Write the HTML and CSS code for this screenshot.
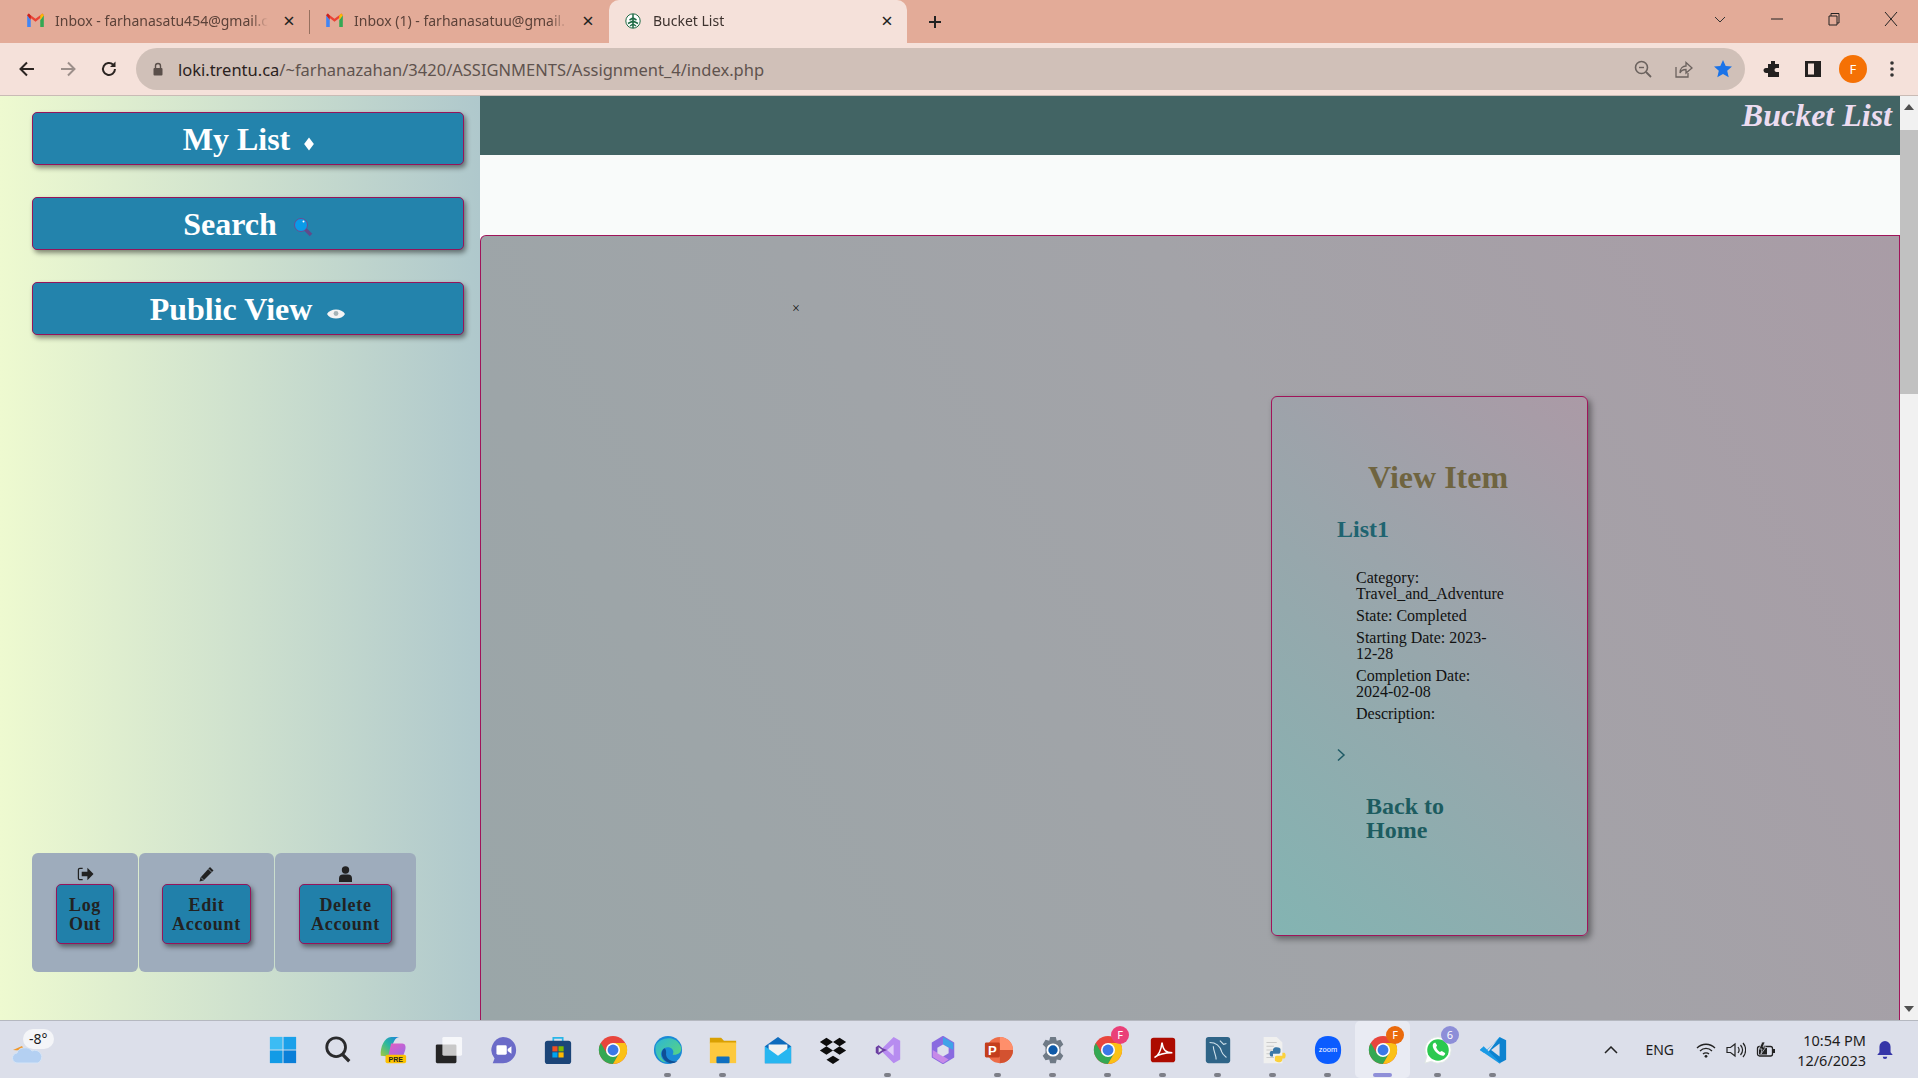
FILE: index.html
```html
<!DOCTYPE html>
<html lang="en">
<head>
    <meta charset="UTF-8">
    <title>Bucket List</title>
    <link rel="stylesheet" href="styles.css">
</head>
<body>
    <svg class="defs" width="0" height="0">
        <defs>
            <symbol id="gmail" viewBox="0 0 16 16">
                <path d="M1 3.500v10h3v-6z" fill="#4285f4"/>
                <path d="M12 7.500v6h3v-10z" fill="#34a853"/>
                <path d="M1 3.500 8 9l7-5.500-1-1.500-6 4.500L2 2z" fill="#ea4335"/>
                <path d="M1 3.500 4 7.500V4L2.500 2.200z" fill="#c5221f"/>
                <path d="M12 7.500 15 3.500 13.500 2.200 12 4z" fill="#fbbc04"/>
            </symbol>
            <symbol id="chrome" viewBox="0 0 32 32">
                <circle cx="16" cy="16" r="15" fill="#e8453c"/>
                <path d="M3 8.500A15 15 0 0 0 16 31l6.500-11.250H9.500z" fill="#34a853"/>
                <path d="M29 8.500H16l6.500 11.250L16 31A15 15 0 0 0 29 8.500z" fill="#fbc116"/>
                <circle cx="16" cy="16" r="7.500" fill="#fff"/>
                <circle cx="16" cy="16" r="5.800" fill="#3b78e7"/>
            </symbol>
            <linearGradient id="copilot-a" x1="0" y1="1" x2="1" y2="0">
                <stop offset="0" stop-color="#a6c93c"/>
                <stop offset=".5" stop-color="#2ab7a0"/>
                <stop offset="1" stop-color="#1a7fe0"/>
            </linearGradient>
            <linearGradient id="copilot-b" x1="0" y1="0" x2="1" y2="1">
                <stop offset="0" stop-color="#e85cc0"/>
                <stop offset="1" stop-color="#9a6ce8"/>
            </linearGradient>
            <linearGradient id="edge-a" x1="0" y1="0" x2="1" y2="1">
                <stop offset="0" stop-color="#2bb5d8"/>
                <stop offset="1" stop-color="#62da70"/>
            </linearGradient>
        </defs>
    </svg>

    <header class="chrome">
        <div class="tabstrip">
            <div class="tab">
                <svg class="favicon favicon-mail"><use href="#gmail"/></svg>
                <span class="tab-title">Inbox - farhanasatu454@gmail.c</span>
                <span class="tab-close">&#215;</span>
            </div>
            <div class="tab tab-sep">
                <svg class="favicon favicon-mail"><use href="#gmail"/></svg>
                <span class="tab-title">Inbox (1) - farhanasatuu@gmail.</span>
                <span class="tab-close">&#215;</span>
            </div>
            <div class="tab tab-active">
                <svg class="favicon" viewBox="0 0 16 16">
                    <circle cx="8" cy="8" r="7.200" fill="#fff" stroke="#1f6b45"/>
                    <path d="M8 1v14M8 5 4.500 7M8 5l3.500 2M8 8 3 10.500M8 8l5 2.500M8 11l-3 2M8 11l3 2" stroke="#1f6b45" stroke-width="1.500" fill="none"/>
                </svg>
                <span class="tab-title">Bucket List</span>
                <span class="tab-close">&#215;</span>
            </div>
            <svg class="new-tab" viewBox="0 0 16 16"><path d="M8 2v12M2 8h12" stroke="#222" stroke-width="2"/></svg>
            <div class="window-btns">
                <svg viewBox="0 0 16 16"><path d="M3 6l5 5 5-5" fill="none" stroke="#333"/></svg>
                <svg viewBox="0 0 16 16"><path d="M2 8h12" stroke="#222"/></svg>
                <svg viewBox="0 0 16 16"><path d="M3 5h8v9H3zM5 5V2.500h8V12h-2" fill="none" stroke="#222"/></svg>
                <svg viewBox="0 0 16 16"><path d="M2 1l12 14M14 1 2 15" stroke="#222"/></svg>
            </div>
        </div>
        <div class="toolbar">
            <svg class="nav-icon" viewBox="0 0 20 20"><path d="M17 10H4M10 3.500 3.500 10l6.500 6.500" fill="none" stroke="#2b2421" stroke-width="2"/></svg>
            <svg class="nav-icon" viewBox="0 0 20 20"><path d="M3 10h13M10 3.500l6.500 6.500-6.500 6.500" fill="none" stroke="#9c8f8a" stroke-width="2"/></svg>
            <svg class="nav-icon" viewBox="0 0 20 20"><path d="M16 10a6 6 0 1 1-1.800-4.300" fill="none" stroke="#2b2421" stroke-width="2"/><path d="M16.500 2.500v5.500H11z" fill="#2b2421"/></svg>
            <div class="omnibox">
                <svg class="lock" viewBox="0 0 12 14"><path d="M3.500 6V4a2.500 2.500 0 0 1 5 0v2" fill="none" stroke="#5a4f4a" stroke-width="1.400"/><rect x="1.500" y="6" width="9" height="7.500" rx="1" fill="#5a4f4a"/></svg>
                <span class="url"><b>loki.trentu.ca</b>/~farhanazahan/3420/ASSIGNMENTS/Assignment_4/index.php</span>
                <svg class="omni-icon" viewBox="0 0 20 20"><circle cx="8.500" cy="8.500" r="6" fill="none" stroke="#6b625e" stroke-width="1.600"/><path d="M13 13l5 5" stroke="#6b625e" stroke-width="1.800"/><path d="M6 8.500h5" stroke="#6b625e" stroke-width="1.400"/></svg>
                <svg class="omni-icon" viewBox="0 0 20 20"><path d="M3 8v10h12v-4" fill="none" stroke="#6b625e" stroke-width="1.300"/><path d="M7 14c0-5 3-7 6-7V3.500l6 5.500-6 5v-3.500c-3 0-5 1-6 3.500z" fill="none" stroke="#6b625e" stroke-width="1.300"/></svg>
                <svg class="omni-icon" viewBox="0 0 20 20"><path d="M10 1l2.700 6 6.300.6-4.800 4.200 1.500 6.400L10 15l-5.700 3.200 1.500-6.400L1 7.600 7.300 7z" fill="#1a73e8"/></svg>
            </div>
            <svg class="tool-icon" viewBox="0 0 20 20"><path d="M8 2h4v3h4v4h-2.500a2 2 0 0 0 0 4H16v5H5v-4H3a2.500 2.500 0 0 1 0-5h2V5h3z" fill="#23201f"/></svg>
            <svg class="tool-icon" viewBox="0 0 20 20"><rect x="2" y="2" width="16" height="16" fill="#23201f"/><rect x="5" y="4.500" width="6" height="11" fill="#f5e1da"/></svg>
            <span class="avatar">F</span>
            <svg class="tool-icon" viewBox="0 0 20 20"><circle cx="10" cy="4" r="1.800" fill="#333"/><circle cx="10" cy="10" r="1.800" fill="#333"/><circle cx="10" cy="16" r="1.800" fill="#333"/></svg>
        </div>
    </header>

    <div class="page">
        <aside class="sidebar">
            <nav class="side-nav">
                <a class="nav-btn">My List<span class="diamond"></span></a>
                <a class="nav-btn">Search<svg class="nav-glyph" viewBox="0 0 20 20"><path d="M12 12l6 6" stroke="#5f4b8b" stroke-width="3.500"/><circle cx="8" cy="8" r="6.500" fill="#0a9be8" stroke="#6a4c93" stroke-width="1"/><circle cx="10.500" cy="4.500" r="1" fill="#fff"/></svg></a>
                <a class="nav-btn">Public View<svg class="nav-glyph eye" viewBox="0 0 20 12"><path d="M1 6c3-6 15-6 18 0-3 6-15 6-18 0z" fill="#f4f4f4"/><circle cx="10" cy="5.500" r="2.400" fill="#a6b4b8"/></svg></a>
            </nav>
            <div class="account-bar">
                <div class="account-cell cell-logout">
                    <svg class="acc-icon" viewBox="0 0 18 16"><path d="M6 2H3a1.500 1.500 0 0 0-1.500 1.500v9A1.500 1.500 0 0 0 3 14h3" fill="none" stroke="#222" stroke-width="1.300"/><path d="M5 5.500h6V1.500L17.500 8 11 14.500v-4H5z" fill="#222"/></svg>
                    <a class="acc-btn">Log<br>Out</a>
                </div>
                <div class="account-cell cell-edit">
                    <svg class="acc-icon" viewBox="0 0 16 16"><path d="M11.500 1 15 4.500 5 14.500 1 15.500l1-4z" fill="#222"/><path d="M10 3l3.500 3.500M2.500 11.500l2.500 2.500" stroke="#9eacbc" stroke-width=".8"/></svg>
                    <a class="acc-btn">Edit<br>Account</a>
                </div>
                <div class="account-cell cell-delete">
                    <svg class="acc-icon" viewBox="0 0 16 16"><circle cx="8" cy="4" r="3.700" fill="#222"/><path d="M1.500 16v-3.500A4 4 0 0 1 5.500 8.500h5a4 4 0 0 1 4 4V16z" fill="#222"/></svg>
                    <a class="acc-btn">Delete<br>Account</a>
                </div>
            </div>
        </aside>

        <main class="content">
            <div class="banner"><span class="brand">Bucket List</span></div>
            <div class="spacer"></div>
            <section class="panel">
                <span class="modal-x">&#215;</span>
                <div class="card">
                    <h2 class="card-title">View Item</h2>
                    <h3 class="item-name">List1</h3>
                    <ul class="details">
                        <li>Category: Travel_and_Adventure</li>
                        <li>State: Completed</li>
                        <li>Starting Date: 2023-12-28</li>
                        <li>Completion Date: 2024-02-08</li>
                        <li>Description:</li>
                    </ul>
                    <svg class="chev" viewBox="0 0 10 14"><path d="M2 1.500 8 7l-6 5.500" fill="none" stroke="#1f5a66" stroke-width="1.500"/></svg>
                    <a class="back-link">Back to Home</a>
                </div>
            </section>
        </main>

        <div class="scrollbar">
            <span class="arrow-up"></span>
            <span class="thumb"></span>
            <span class="arrow-down"></span>
        </div>
    </div>

    <footer class="taskbar">
        <div class="weather">
            <svg class="weather-icon" viewBox="0 0 32 26"><path d="M1 12l9-4 3 5z" fill="#f0982c"/><path d="M6 25a5 5 0 0 1-1-10 8 6 0 0 1 15-2 6 6 0 0 1 6 12z" fill="#b4d0f2" stroke="#d5e4f6"/></svg>
            <span class="temp">-8°</span>
        </div>
        <div class="apps">
            <span class="app"><svg viewBox="0 0 32 32"><path d="M2 2h13.500v13.500H2z" fill="#3cbcf4"/><path d="M16.500 2H30v13.500H16.500z" fill="#1ba1ea"/><path d="M2 16.500h13.500V30H2z" fill="#129be6"/><path d="M16.500 16.500H30V30H16.500z" fill="#0a7fd8"/></svg></span>
            <span class="app"><svg viewBox="0 0 32 32"><circle cx="14" cy="13" r="10" fill="none" stroke="#2a2a2c" stroke-width="3"/><path d="M21 21l7 7" stroke="#2a2a2c" stroke-width="3.500"/></svg></span>
            <span class="app"><svg viewBox="0 0 32 32"><path d="M3 22C2 13 7 2 14 2h9c-4 0-6 4-8 10l-3 11z" fill="url(#copilot-a)"/><path d="M14 9h12c3 0 4 3 3 7l-2 6H11z" fill="url(#copilot-b)"/><rect x="8" y="21" width="22" height="9" rx="2" fill="#fcc200"/><text class="pre" x="19" y="28.500">PRE</text></svg></span>
            <span class="app"><svg viewBox="0 0 32 32"><rect x="3" y="10" width="22" height="20" rx="1.500" fill="#252525"/><rect x="10" y="2" width="21" height="20" rx="1.500" fill="#fff" fill-opacity=".75"/></svg></span>
            <span class="app"><svg viewBox="0 0 32 32"><path d="M16 2a14 14 0 0 1 0 28H5l2-5A14 14 0 0 1 16 2z" fill="#6b6bc8"/><rect x="9" y="11" width="11" height="10" rx="1.500" fill="#fff"/><path d="M21 15l4-3v8l-4-3z" fill="#fff"/></svg></span>
            <span class="app"><svg viewBox="0 0 32 32"><path d="M11 7V3h10v4" fill="none" stroke="#29b6e8" stroke-width="1.800"/><rect x="2" y="6" width="28" height="25" rx="3" fill="#1c4578"/><path d="M10 12h5.500v5.500H10z" fill="#f25022"/><path d="M16.500 12H22v5.500h-5.500z" fill="#7fba00"/><path d="M10 18.500h5.500V24H10z" fill="#00a4ef"/><path d="M16.500 18.500H22V24h-5.500z" fill="#ffb900"/></svg></span>
            <span class="app"><svg viewBox="0 0 32 32"><use href="#chrome"/></svg></span>
            <span class="app has-dot"><svg viewBox="0 0 32 32"><circle cx="16" cy="16" r="15" fill="#1a8ad6"/><path d="M3 11C7 2 25-1 30 13c1 6-4 9-9 8 3-6-4-10-9-7-6 4-4 12 2 15C7 29 1 20 3 11z" fill="url(#edge-a)"/><path d="M12 14c-5 4-3 13 6 16 3 0 6 0 8-2-7 1-13-3-12-9 0-2 0-4-2-5z" fill="#0f4f96"/></svg></span>
            <span class="app has-dot"><svg viewBox="0 0 32 32"><path d="M2 3h12l3 3h13v3H2z" fill="#d9a002"/><path d="M2 8h28v22H2z" fill="#fdc93e"/><rect x="9" y="23" width="14" height="7" rx="1" fill="#0f6fc0"/></svg></span>
            <span class="app"><svg viewBox="0 0 32 32"><path d="M2 12 16 2l14 10v18H2z" fill="#0f6cbd"/><path d="M6 10h20v10l-10 5-10-5z" fill="#f2f2f2"/><path d="M2 12l14 10 14-10v18H2z" fill="#28b6f0"/></svg></span>
            <span class="app"><svg viewBox="0 0 32 32"><path d="M9 3l7 4.500L9 12 2 7.500zM23 3l7 4.500L23 12l-7-4.500zM9 12l7 4.500L9 21l-7-4.500zM23 12l7 4.500-7 4.500-7-4.500zM16 22l7 4.500L16 31l-7-4.500z" fill="#0d0d0d"/></svg></span>
            <span class="app has-dot"><svg viewBox="0 0 32 32"><path d="M22 2l7 4v20l-7 4-12-12-4 3-3-2V13l3-2 4 3z" fill="#b78cf0"/><path d="M22 10v12l-7-6z" fill="#dfcdf8"/><path d="M3 13l3-2 4 3 5 2-5 2-4 3-3-2z" fill="#6b3fa0"/><path d="M6 13l4 3-4 3z" fill="#dcdfea"/></svg></span>
            <span class="app"><svg viewBox="0 0 32 32"><path d="M16 2l11 6.500v15L16 30 5 23.500v-15z" fill="#8a6be0" stroke="#8a6be0" stroke-width="2" stroke-linejoin="round"/><path d="M16 2l11 6.500V16L16 10z" fill="#3fa2e8"/><path d="M5 16v7.500L16 30l6-4-12-7z" fill="#c78ae8"/><path d="M16 10l6 3.500v6L16 23l-6-3.500v-6z" fill="#dde0ec"/></svg></span>
            <span class="app has-dot"><svg viewBox="0 0 32 32"><circle cx="18" cy="16" r="14" fill="#ed6c47"/><path d="M18 2a14 14 0 0 1 14 14H18z" fill="#ff8f6b"/><path d="M18 16h14a14 14 0 0 1-14 14z" fill="#d35230"/><rect x="2" y="8" width="16" height="16" rx="1.500" fill="#c43e1c"/><text class="ppt" x="10" y="21">P</text></svg></span>
            <span class="app has-dot"><svg viewBox="0 0 32 32"><path d="M13 2h6l1 4 4-1 3 5-3 3v6l3 3-3 5-4-1-1 4h-6l-1-4-4 1-3-5 3-3v-6L5 10l3-5 4 1z" fill="#6f7a86"/><circle cx="16" cy="16" r="7" fill="#fff"/><circle cx="16" cy="16" r="5" fill="#0f5aa8"/></svg></span>
            <span class="app has-dot"><svg viewBox="0 0 32 32"><use href="#chrome"/></svg><i class="badge badge-pink">F</i></span>
            <span class="app has-dot"><svg viewBox="0 0 32 32"><rect x="3" y="3" width="26" height="26" rx="3" fill="#ad0b00"/><path d="M7 24c4-2 7-8 8-16 1 8 4 11 11 11-6 0-14 1-19 5z" fill="none" stroke="#fff" stroke-width="1.700"/></svg></span>
            <span class="app has-dot"><svg viewBox="0 0 32 32"><rect x="3" y="2" width="26" height="28" rx="3" fill="#2f6487"/><path d="M7 8c6 0 11 3 13 10 1 3 3 4 5 6M11 12c0 5 3 9 3 14M18 6l4 4 3-1" fill="none" stroke="#cfe0ea" stroke-width="1.200"/></svg></span>
            <span class="app has-dot"><svg viewBox="0 0 32 32"><path d="M6 2h14l6 6v22H6z" fill="#f0f0ef"/><path d="M9 8h11M9 12h8M9 16h8M9 20h6M9 24h8" stroke="#c8c8c8"/><path d="M20 13c-4 0-4 2-4 4h-2c-2 0-2 6 0 6h2v-3h6c2 0 2-2 2-3v-2c0-1-2-2-4-2z" fill="#3b78a8"/><path d="M22 29c4 0 4-2 4-4h2c2 0 2-6 0-6h-2v3h-6c-2 0-2 2-2 3v2c0 1 2 2 4 2z" fill="#fbd13c"/></svg></span>
            <span class="app has-dot"><svg viewBox="0 0 32 32"><path d="M16 1c9 0 14 5 14 15s-5 15-14 15S2 25 2 16 7 1 16 1z" fill="#0b5cff"/><text class="zoom" x="16" y="18.500">zoom</text></svg></span>
            <span class="app app-active"><svg viewBox="0 0 32 32"><use href="#chrome"/></svg><i class="badge badge-orange">F</i></span>
            <span class="app has-dot"><svg viewBox="0 0 32 32"><path d="M16 2a14 14 0 0 1 0 28c-3 0-5-1-7-2l-7 2 2-7a14 14 0 0 1 12-21z" fill="#fff" stroke="#dfe6e3"/><circle cx="16" cy="16" r="11.500" fill="#2bc94f"/><path d="M11 9c-3 4 5 14 11 13 2-1 2-3 1-3l-3-2-2 1c-2-1-3-3-4-5l1-2-2-3z" fill="#fff"/></svg><i class="badge badge-violet">6</i></span>
            <span class="app has-dot"><svg viewBox="0 0 32 32"><path d="M23 2l7 3.500v21L23 30 11 18z" fill="#0d83d0"/><path d="M23 9v14l-9-7z" fill="#dce0eb"/><path d="M24 2 6 19l-4-3 2-2 5 3L23 2z" fill="#27a5ed"/><path d="M2 16l4-4 18 18-1 .5z" fill="#1a9ae5"/></svg></span>
        </div>
        <div class="tray">
            <svg class="tray-chev" viewBox="0 0 14 8"><path d="M1 7l6-6 6 6" fill="none" stroke="#222" stroke-width="1.500"/></svg>
            <span class="lang">ENG</span>
            <svg class="tray-icon wifi" viewBox="0 0 20 16"><path d="M1 6c5-5 13-5 18 0M4 9c3.500-3.500 8.500-3.500 12 0M7 12c1.500-1.500 4.500-1.500 6 0" fill="none" stroke="#222" stroke-width="1.300"/><circle cx="10" cy="14.300" r="1.400" fill="#222"/></svg>
            <svg class="tray-icon" viewBox="0 0 20 16"><path d="M1 5.500h3.500L9 2v12l-4.500-3.500H1z" fill="none" stroke="#222" stroke-width="1.200"/><path d="M12 5c1.500 2 1.500 4 0 6M14.500 3c2.500 3 2.500 7 0 10M17 1c3.500 4 3.500 10 0 14" fill="none" stroke="#222" stroke-width="1.200"/></svg>
            <svg class="tray-icon" viewBox="0 0 20 16"><rect x="1.500" y="4.500" width="15" height="9.500" rx="2" fill="none" stroke="#222" stroke-width="1.300"/><rect x="3" y="6" width="8" height="6.500" fill="#222"/><rect x="17" y="7" width="2" height="4" fill="#222"/><path d="M6 0 3 7h3l-1 5 5-7H7l2-5z" fill="#222" stroke="#dcdfea" stroke-width=".7"/></svg>
            <div class="clock"><span>10:54 PM</span><span>12/6/2023</span></div>
            <svg class="bell" viewBox="0 0 16 18"><path d="M8 1a5 5 0 0 1 5 5v5l2 2.500H1L3 11V6a5 5 0 0 1 5-5z" fill="#3636a8"/><path d="M6 15h4a2 2 0 0 1-4 0z" fill="#3636a8"/></svg>
        </div>
    </footer>
</body>
</html>
```

FILE: styles.css
```css
* {
    box-sizing: border-box;
}
html, body {
    margin: 0;
    height: 100%;
    overflow: hidden;
}
body {
    display: flex;
    flex-direction: column;
    height: 1078px;
    font-family: "Liberation Serif", serif;
}
.defs {
    position: absolute;
}

/* browser chrome */
.chrome {
    font-family: "Noto Sans", sans-serif;
    flex: none;
    height: 96px;
    background: #f5e1da;
    border-bottom: 1px solid #c9bbb5;
}
.tabstrip {
    display: flex;
    align-items: stretch;
    height: 43px;
    padding-left: 11px;
    background: #e3ab98;
}
.tab {
    display: flex;
    align-items: center;
    width: 298px;
    margin-right: 1px;
    padding: 0 13px 2px 16px;
    font-size: 14px;
    color: #5c4239;
}
.tab-sep {
    position: relative;
}
.tab-sep::before {
    content: "";
    position: absolute;
    left: -1px;
    top: 10px;
    height: 24px;
    border-left: 1px solid #96705f;
}
.tab-active {
    background: #f5e1da;
    border-radius: 10px 10px 0 0;
    color: #3d322e;
}
.favicon {
    flex: none;
    width: 16px;
    height: 16px;
    margin-right: 12px;
}
.favicon-mail {
    width: 19px;
    height: 19px;
    margin: 0 10px 0 -1px;
}
.tab-title {
    flex: 1;
    overflow: hidden;
    white-space: nowrap;
    -webkit-mask-image: linear-gradient(90deg, #000 92%, transparent);
    mask-image: linear-gradient(90deg, #000 92%, transparent);
}
.tab-close {
    flex: none;
    width: 14px;
    margin-left: 14px;
    text-align: center;
    font-size: 20px;
    color: #222;
}
.new-tab {
    align-self: center;
    width: 16px;
    height: 16px;
    margin-left: 19px;
}
.window-btns {
    display: flex;
    align-items: center;
    gap: 41px;
    margin-left: auto;
    padding: 0 19px 6px 0;
}
.window-btns svg {
    width: 16px;
    height: 16px;
}
.toolbar {
    display: flex;
    align-items: center;
    height: 52px;
    padding: 0 16px 0 17px;
}
.nav-icon {
    width: 20px;
    height: 20px;
    margin-right: 21px;
}
.nav-icon:nth-child(3) {
    margin-right: 17px;
}
.omnibox {
    display: flex;
    align-items: center;
    width: 1611px;
    height: 42px;
    padding: 0 12px 0 16px;
    background: #d0c0b8;
    border-radius: 21px;
}
.lock {
    width: 12px;
    height: 14px;
    margin-right: 14px;
}
.url {
    flex: 1;
    font-size: 16.500px;
    color: #5f534e;
    white-space: nowrap;
}
.url b {
    font-weight: 400;
    color: #2a2220;
}
.omni-icon {
    width: 20px;
    height: 20px;
    margin-left: 20px;
}
.tool-icon {
    flex: none;
    width: 20px;
    height: 20px;
    margin-left: 20px;
}
.omnibox + .tool-icon {
    margin-left: 18px;
}
.avatar {
    flex: none;
    width: 28px;
    height: 28px;
    margin-left: 16px;
    margin-right: -5px;
    border-radius: 50%;
    background: #f57105;
    color: #fff;
    font-size: 13px;
    line-height: 28px;
    text-align: center;
}

/* page */
.page {
    flex: 1;
    display: flex;
    min-height: 0;
}
.sidebar {
    flex: none;
    width: 480px;
    display: flex;
    flex-direction: column;
    justify-content: space-between;
    padding: 16px 16px 48px 32px;
    background: linear-gradient(90deg, #eefad0, #afc8cc);
}
.side-nav {
    display: flex;
    flex-direction: column;
    gap: 32px;
}
.nav-btn {
    display: flex;
    align-items: center;
    justify-content: center;
    height: 53px;
    padding-top: 2px;
    background: #2383ac;
    border: 1.500px solid #96145a;
    border-radius: 5px;
    box-shadow: 2px 3px 5px rgba(0, 0, 0, .45);
    color: #fff;
    font-size: 32px;
    font-weight: bold;
    white-space: nowrap;
}
.diamond {
    flex: none;
    width: 8px;
    height: 8px;
    margin: 8px 0 0 15px;
    background: #fff;
    transform: rotate(45deg) skew(8deg, 8deg);
}
.nav-glyph {
    flex: none;
    width: 20px;
    height: 20px;
    margin: 5px 0 0 16px;
}
.nav-glyph.eye {
    height: 12px;
    margin: 8px 0 0 14px;
}
.account-bar {
    display: flex;
    gap: 1px;
    width: 384px;
    height: 119px;
}
.account-cell {
    display: flex;
    flex-direction: column;
    align-items: center;
    padding-top: 13px;
    background: #9eacbc;
    border-radius: 6px;
}
.cell-logout {
    width: 106px;
}
.cell-edit {
    width: 135px;
}
.cell-delete {
    flex: 1;
}
.acc-icon {
    width: 17px;
    height: 16px;
    margin-bottom: 2px;
}
.acc-btn {
    padding: 11px 0 9px;
    background: #2180aa;
    border: 1.500px solid #96145a;
    border-radius: 5px;
    box-shadow: 2px 3px 5px rgba(0, 0, 0, .45);
    color: #222;
    font-size: 18px;
    font-weight: bold;
    letter-spacing: .7px;
    line-height: 19px;
    text-align: center;
}
.cell-logout .acc-btn {
    width: 58px;
}
.cell-edit .acc-btn {
    width: 89px;
}
.cell-delete .acc-btn {
    width: 93px;
}

.content {
    flex: 1;
    display: flex;
    flex-direction: column;
    min-width: 0;
}
.banner {
    flex: none;
    height: 59px;
    padding: 0 8px 0 0;
    background: #426464;
    text-align: right;
}
.brand {
    color: #ecdcf0;
    font-size: 32px;
    font-weight: bold;
    font-style: italic;
    line-height: 38px;
}
.spacer {
    flex: none;
    height: 80px;
    background: #f9fbfa;
}
.panel {
    position: relative;
    flex: 1;
    min-height: 0;
    padding: 160px 0 0 790px;
    overflow: hidden;
    background: linear-gradient(240deg, #a99ca6, #a3a3a8 40%, #9aa6a8);
    border: 1px solid #a0145a;
    border-bottom: 0;
    border-radius: 6px 0 0 0;
}
.modal-x {
    position: absolute;
    left: 311px;
    top: 66px;
    font-size: 14px;
    line-height: 14px;
    color: #111;
}
.card {
    width: 317px;
    height: 540px;
    padding: 64px 66px 0 65px;
    background: linear-gradient(220deg, #ab9aa6, #83b4b2);
    border: 1px solid #a0145a;
    border-radius: 6px;
    box-shadow: 3px 3px 6px rgba(0, 0, 0, .4);
}
.card-title {
    margin: 0;
    padding-left: 31px;
    color: #6f6440;
    font-size: 32px;
    line-height: 32px;
    white-space: nowrap;
}
.item-name {
    margin: 22px 0 0;
    color: #1f6470;
    font-size: 24px;
    line-height: 28px;
}
.details {
    margin: 27px 0 0;
    padding: 0 0 0 19px;
    list-style: none;
    color: #111;
    font-size: 16px;
    line-height: 16px;
}
.details li {
    width: 140px;
    margin-bottom: 6px;
}
.chev {
    display: block;
    width: 10px;
    height: 14px;
    margin: 26px 0 0 -1px;
}
.back-link {
    display: block;
    margin: 32px 20px 0 29px;
    color: #1d5c60;
    font-size: 24px;
    font-weight: bold;
    line-height: 24px;
}
.scrollbar {
    flex: none;
    width: 18px;
    display: flex;
    flex-direction: column;
    align-items: center;
    background: #f1f1f1;
    padding-top: 8px;
}
.arrow-up, .arrow-down {
    flex: none;
    width: 0;
    height: 0;
    border-left: 5px solid transparent;
    border-right: 5px solid transparent;
}
.arrow-up {
    border-bottom: 6px solid #505050;
}
.arrow-down {
    margin-top: auto;
    margin-bottom: 8px;
    border-top: 6px solid #505050;
}
.thumb {
    width: 100%;
    height: 264px;
    margin-top: 20px;
    background: #c1c1c1;
}

/* windows taskbar */
.taskbar {
    flex: none;
    display: flex;
    align-items: center;
    height: 58px;
    background: #dcdfea;
    border-top: 1px solid #b5b8c0;
    font-family: "Noto Sans", sans-serif;
    color: #1c1c1c;
}
.weather {
    position: relative;
    flex: none;
    width: 255px;
    height: 100%;
}
.weather-icon {
    position: absolute;
    left: 12px;
    top: 17px;
    width: 32px;
    height: 26px;
}
.temp {
    position: absolute;
    left: 23px;
    top: 8px;
    padding: 0 6px;
    background: #f4f5f8;
    border-radius: 10px;
    font-size: 14px;
    line-height: 20px;
}
.apps {
    display: flex;
    height: 100%;
}
.app {
    position: relative;
    display: flex;
    align-items: center;
    justify-content: center;
    width: 55px;
    height: 100%;
}
.app svg {
    width: 30px;
    height: 30px;
}
.has-dot::after, .app-active::after {
    content: "";
    position: absolute;
    bottom: 1px;
    left: 24px;
    width: 7px;
    height: 4px;
    background: #7d7f88;
    border-radius: 2px;
}
.app-active {
    background: #e9ebf3;
    border-radius: 5px;
}
.app-active::after {
    left: 18px;
    width: 19px;
    background: #8f8fd8;
}
.badge {
    position: absolute;
    top: 5px;
    right: 6px;
    width: 18px;
    height: 18px;
    border-radius: 50%;
    color: #fff;
    font-size: 11px;
    font-style: normal;
    line-height: 18px;
    text-align: center;
}
.badge-pink {
    background: #ea3f78;
}
.badge-orange {
    background: #ea6a0c;
}
.badge-violet {
    background: #8d8ed8;
}
.pre {
    font-family: "Liberation Sans", sans-serif;
    font-size: 7.500px;
    font-weight: bold;
    text-anchor: middle;
    fill: #222;
}
.ppt {
    font-family: "Liberation Sans", sans-serif;
    font-size: 14px;
    font-weight: bold;
    text-anchor: middle;
    fill: #fff;
}
.zoom {
    font-family: "Liberation Sans", sans-serif;
    font-size: 8px;
    text-anchor: middle;
    fill: #fff;
}
.tray {
    flex: 1;
    display: flex;
    align-items: center;
    justify-content: flex-end;
    padding-right: 24px;
}
.tray-chev {
    width: 14px;
    height: 8px;
}
.lang {
    margin-left: 27px;
    font-size: 14px;
}
.tray-icon {
    width: 20px;
    height: 16px;
    margin-left: 10px;
}
.wifi {
    margin-left: 22px;
}
.clock {
    display: flex;
    flex-direction: column;
    align-items: flex-end;
    width: 90px;
    font-size: 14.500px;
    line-height: 20px;
}
.bell {
    width: 18px;
    height: 20px;
    margin-left: 10px;
}
```
